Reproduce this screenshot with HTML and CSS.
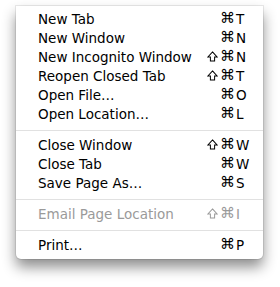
FILE: index.html
```html
<!DOCTYPE html>
<html>
<head>
  <title>File Menu</title>
  <link rel="stylesheet" href="styles.css">
</head>
<body>
  <div class="menu">
    <div class="item"><span class="label">New Tab</span><span class="keys"><span class="cmd">⌘</span><span class="key">T</span></span></div>
    <div class="item"><span class="label">New Window</span><span class="keys"><span class="cmd">⌘</span><span class="key">N</span></span></div>
    <div class="item"><span class="label">New Incognito Window</span><span class="keys"><svg class="shift" viewBox="0 0 12 12"><path d="M6 1 L11 6.5 H8.3 V11 H3.7 V6.5 H1 Z"/></svg><span class="cmd">⌘</span><span class="key">N</span></span></div>
    <div class="item"><span class="label">Reopen Closed Tab</span><span class="keys"><svg class="shift" viewBox="0 0 12 12"><path d="M6 1 L11 6.5 H8.3 V11 H3.7 V6.5 H1 Z"/></svg><span class="cmd">⌘</span><span class="key">T</span></span></div>
    <div class="item"><span class="label">Open File…</span><span class="keys"><span class="cmd">⌘</span><span class="key">O</span></span></div>
    <div class="item"><span class="label">Open Location…</span><span class="keys"><span class="cmd">⌘</span><span class="key">L</span></span></div>
    <div class="sep"></div>
    <div class="item"><span class="label">Close Window</span><span class="keys"><svg class="shift" viewBox="0 0 12 12"><path d="M6 1 L11 6.5 H8.3 V11 H3.7 V6.5 H1 Z"/></svg><span class="cmd">⌘</span><span class="key">W</span></span></div>
    <div class="item"><span class="label">Close Tab</span><span class="keys"><span class="cmd">⌘</span><span class="key">W</span></span></div>
    <div class="item"><span class="label">Save Page As…</span><span class="keys"><span class="cmd">⌘</span><span class="key">S</span></span></div>
    <div class="sep"></div>
    <div class="item disabled"><span class="label">Email Page Location</span><span class="keys"><svg class="shift" viewBox="0 0 12 12"><path d="M6 1 L11 6.5 H8.3 V11 H3.7 V6.5 H1 Z"/></svg><span class="cmd">⌘</span><span class="key">I</span></span></div>
    <div class="sep"></div>
    <div class="item"><span class="label">Print…</span><span class="keys"><span class="cmd">⌘</span><span class="key">P</span></span></div>
  </div>
</body>
</html>
```

FILE: styles.css
```css
html, body { height: 100%; }
body {
  margin: 0; padding: 6px 0 0 16px;
  box-sizing: border-box;
  background: #fff;
  font-family: "DejaVu Sans", sans-serif;
}
.menu {
  width: 247px;
  height: 253px;
  box-sizing: border-box;
  padding: 3px 0;
  background: #fff;
  border-radius: 0 0 5px 5px;
  box-shadow: 0 0 0 1px rgba(0,0,0,0.08), 0 8px 14px rgba(0,0,0,0.45);
}
.item {
  display: flex; align-items: center;
  height: 19px;
  padding: 0 14px 0 22px;
  font-size: 13.5px; color: #000;
}
.label { flex: 1; }
.keys { display: flex; align-items: center; }
.cmd { font-size: 15px; line-height: 19px; }
.key { width: 13px; margin-left: 1px; }
.shift {
  width: 11px; height: 11px; margin-right: 2px;
  fill: none; stroke: currentColor; stroke-width: 1.1;
}
.disabled { color: #9a9a9a; }
.sep {
  height: 1px; background: #e1e1e1;
  margin: 7px 0 4px;
}
```
